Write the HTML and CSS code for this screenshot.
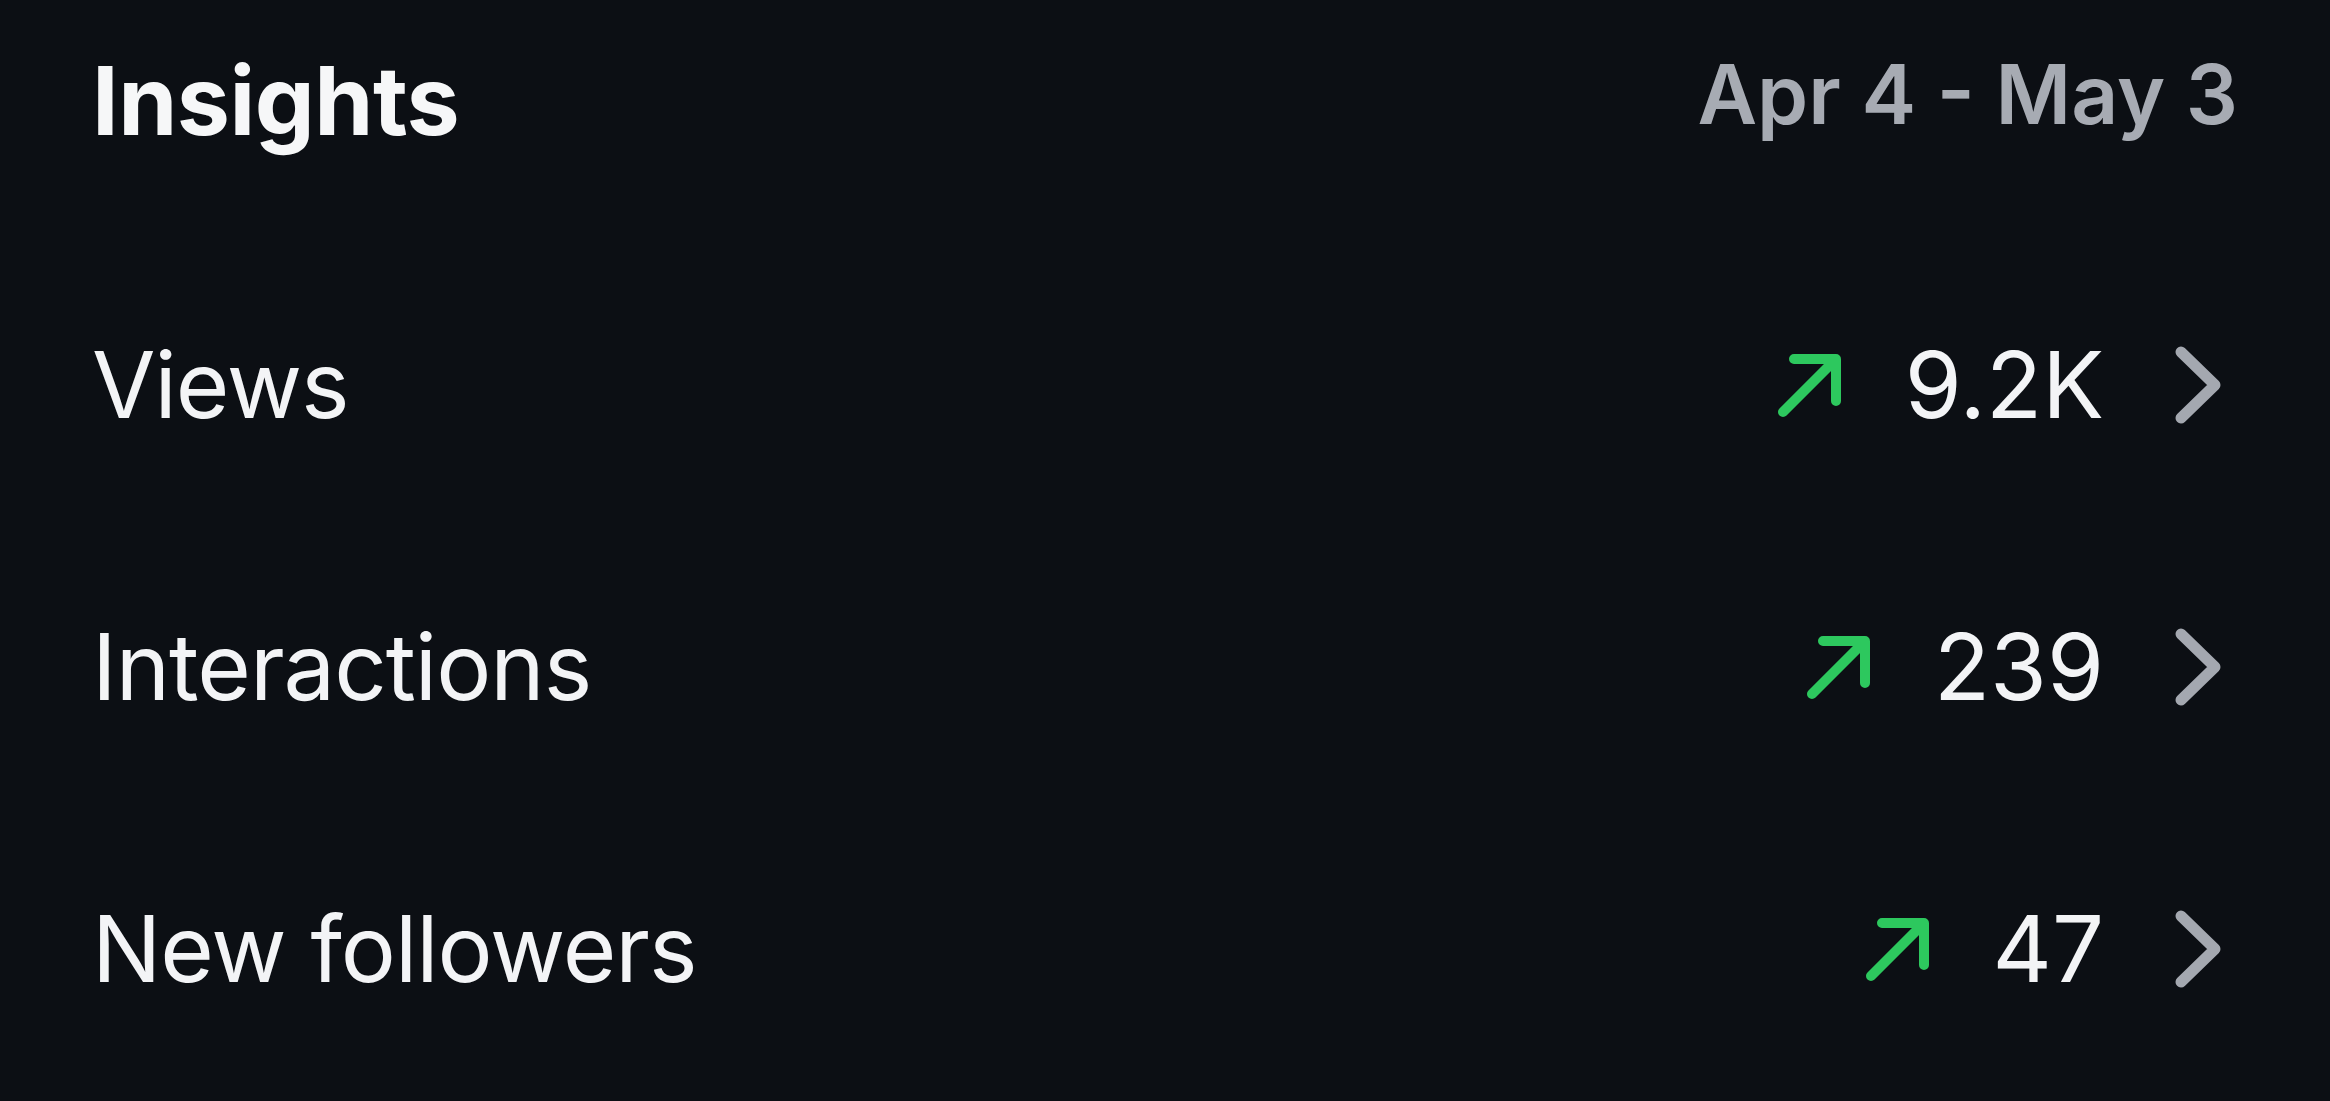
FILE: index.html
```html
<!DOCTYPE html>
<html lang="en">
<head>
<meta charset="utf-8">
<title>Insights</title>
<link rel="stylesheet" href="styles.css">
</head>
<body>
<main class="panel">
  <header class="header">
    <h1 class="title">Insights</h1>
    <span class="range">Apr 4 - May 3</span>
  </header>
  <ul class="list">
    <li class="row">
      <span class="label">Views</span>
      <span class="meta">
        <svg class="trend" viewBox="0 0 66 66"><path d="M6 60 L59 7 M17 7 H59 V49"/></svg>
        <span class="value">9.2K</span>
        <svg class="chev" viewBox="0 0 48 78"><path d="M7 6 L41 39 L7 72"/></svg>
      </span>
    </li>
    <li class="row">
      <span class="label">Interactions</span>
      <span class="meta">
        <svg class="trend" viewBox="0 0 66 66"><path d="M6 60 L59 7 M17 7 H59 V49"/></svg>
        <span class="value">239</span>
        <svg class="chev" viewBox="0 0 48 78"><path d="M7 6 L41 39 L7 72"/></svg>
      </span>
    </li>
    <li class="row">
      <span class="label">New followers</span>
      <span class="meta">
        <svg class="trend" viewBox="0 0 66 66"><path d="M6 60 L59 7 M17 7 H59 V49"/></svg>
        <span class="value">47</span>
        <svg class="chev" viewBox="0 0 48 78"><path d="M7 6 L41 39 L7 72"/></svg>
      </span>
    </li>
  </ul>
</main>
</body>
</html>
```

FILE: styles.css
```css
html, body {
  margin: 0;
  padding: 0;
  background: #0c0f14;
}
body {
  width: 2330px;
  height: 1101px;
  overflow: hidden;
  font-family: Inter, "Noto Sans", "Liberation Sans", sans-serif;
  color: #f3f4f6;
}
.panel {
  padding: 53px 92px 0 92px;
}
.header {
  display: flex;
  justify-content: space-between;
  align-items: flex-start;
}
.title {
  margin: 0;
  font-size: 95px;
  line-height: 95px;
  font-weight: 700;
  color: #f6f7f8;
  letter-spacing: -0.5px;
}
.range {
  margin-top: 1px;
  font-size: 82px;
  line-height: 82px;
  font-weight: 600;
  color: #a7abb3;
}
.list {
  list-style: none;
  margin: 96px 0 0 0;
  padding: 0 16px 0 0;
}
.row {
  height: 282px;
  display: flex;
  justify-content: space-between;
  align-items: center;
}
.label {
  font-size: 92px;
  line-height: 92px;
  font-weight: 400;
  letter-spacing: -1px;
}
.meta {
  display: flex;
  align-items: center;
}
.value {
  font-size: 92px;
  line-height: 92px;
  font-weight: 400;
  margin-left: 62px;
  margin-right: 70px;
}
.trend {
  width: 66px;
  height: 66px;
  fill: none;
  stroke: #2dc85e;
  stroke-width: 10;
  stroke-linecap: round;
  stroke-linejoin: round;
}
.chev {
  width: 48px;
  height: 78px;
  fill: none;
  stroke: #a4a8b0;
  stroke-width: 11;
  stroke-linecap: round;
  stroke-linejoin: round;
}
```
